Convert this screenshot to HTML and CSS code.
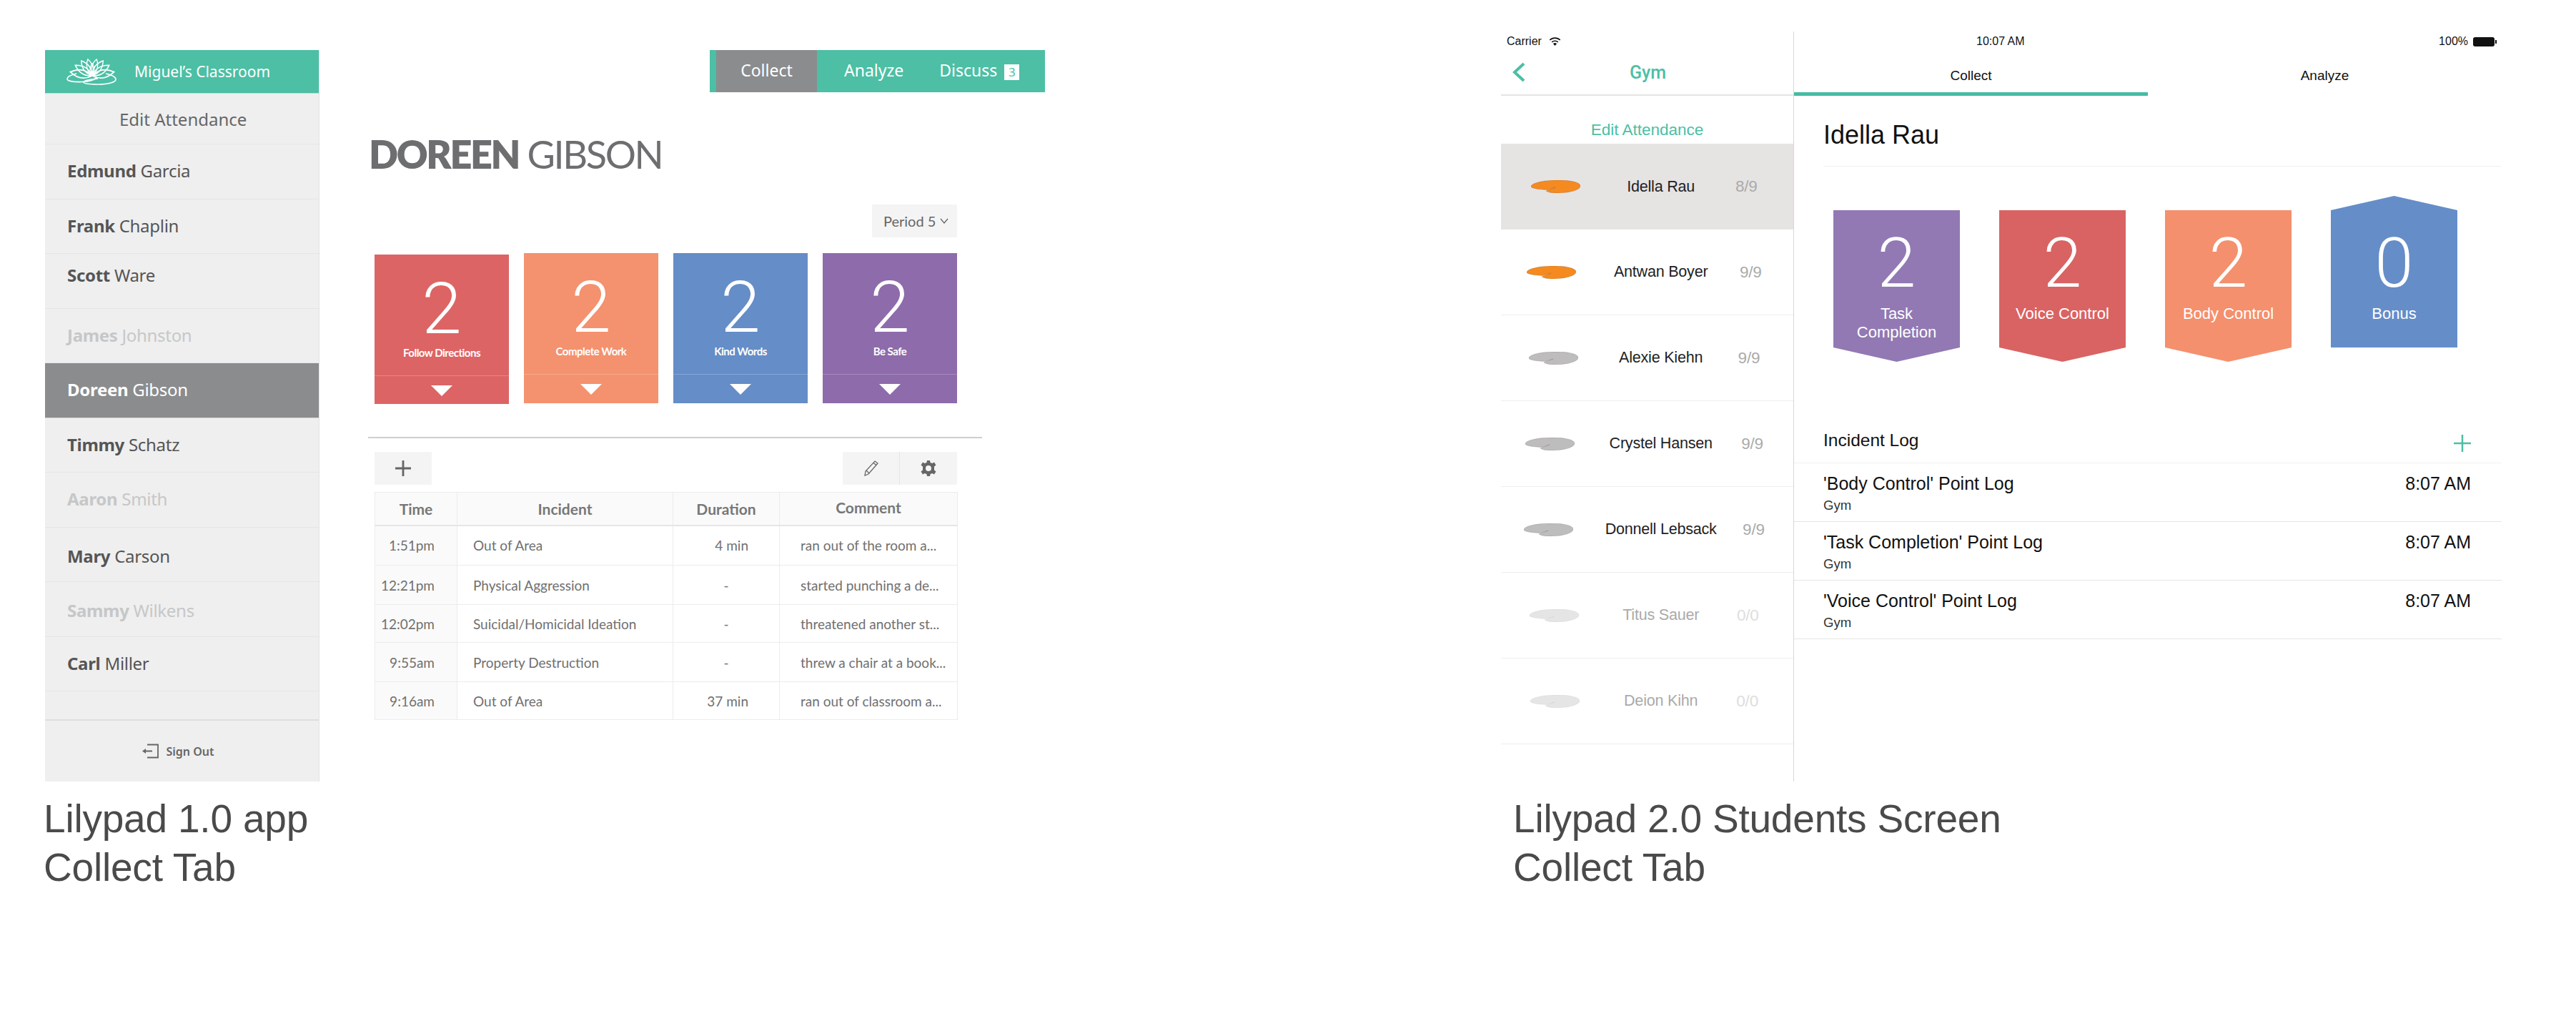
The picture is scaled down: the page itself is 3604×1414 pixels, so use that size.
FILE: index.html
```html
<!DOCTYPE html>
<html lang="en">
<head>
    <meta charset="UTF-8">
    <title>Lilypad Collect Tab</title>
    <link rel="stylesheet" href="styles.css">
</head>
<body>
    <svg class="defs" width="0" height="0">
        <defs>
            <path id="leaf" d="M34 10 L21 15 C24 17 29 18 35 18 C53 18 69 14 69 8 C69 3 55 0 38 0 C17 0 0 4 0 9 C0 11 9 13 23 13.5 Z"/>
            <path id="petal" d="M0 0 C-5 -7 -4 -14 0 -20 C4 -14 5 -7 0 0 Z"/>
        </defs>
    </svg>

    <div class="page">
        <section class="old-app">
            <div class="old-screen">
                <aside class="sidebar">
                    <div class="brand">
                        <svg class="lotus" viewBox="0 0 70 37">
                            <g fill="none" stroke="#fff" stroke-width="1.1">
                                <g transform="translate(36 24)">
                                    <use href="#petal" transform="rotate(-80) scale(1.6 1.55)"/>
                                    <use href="#petal" transform="rotate(80) scale(1.6 1.55)"/>
                                    <use href="#petal" transform="rotate(-58) scale(1.4)"/>
                                    <use href="#petal" transform="rotate(58) scale(1.4)"/>
                                    <use href="#petal" transform="rotate(-36) scale(1.3)"/>
                                    <use href="#petal" transform="rotate(36) scale(1.3)"/>
                                    <use href="#petal" transform="rotate(-15) scale(1.2)"/>
                                    <use href="#petal" transform="rotate(15) scale(1.2)"/>
                                    <use href="#petal" transform="scale(.9)"/>
                                </g>
                                <g stroke-width="1.7">
                                    <path d="M14 21 C5 23 1 26 1 28.500 C1 31 8 33 22 32.500 C31 32 38 30 42 27"/>
                                    <path d="M55 21 C64 23 69 26 69 29 C69 33 58 36 44 36 C32 36 24 35 24 33 C24 31 32 29 44 28"/>
                                </g>
                            </g>
                        </svg>
                        <span>Miguel’s Classroom</span>
                    </div>
                    <div class="edit-row">Edit Attendance</div>
                    <ul class="roster">
                        <li class="pupil"><b>Edmund</b> Garcia</li>
                        <li class="pupil"><b>Frank</b> Chaplin</li>
                        <li class="pupil pupil-high"><b>Scott</b> Ware</li>
                        <li class="pupil faded"><b>James</b> Johnston</li>
                        <li class="pupil selected"><b>Doreen</b> Gibson</li>
                        <li class="pupil"><b>Timmy</b> Schatz</li>
                        <li class="pupil faded"><b>Aaron</b> Smith</li>
                        <li class="pupil pupil-low"><b>Mary</b> Carson</li>
                        <li class="pupil pupil-low faded"><b>Sammy</b> Wilkens</li>
                        <li class="pupil"><b>Carl</b> Miller</li>
                    </ul>
                    <div class="sign-out">
                        <svg viewBox="0 0 23 21" width="23" height="21">
                            <path d="M7 1.500 H22 V19.500 H7" fill="none" stroke="#666" stroke-width="1.800"/>
                            <path d="M0 10.500 L5 7 V9.500 H14 V11.500 H5 V14 Z" fill="#666"/>
                        </svg>
                        <span>Sign Out</span>
                    </div>
                </aside>

                <main class="profile">
                    <nav class="tab-bar">
                        <a class="tab active">Collect</a>
                        <a class="tab">Analyze</a>
                        <a class="tab tab-discuss">Discuss <i class="count">3</i></a>
                    </nav>
                    <h1 class="student-name"><b>DOREEN</b> GIBSON</h1>
                    <div class="panel">
                        <div class="period">
                            <span>Period 5</span>
                            <svg viewBox="0 0 12 8" width="12" height="8"><path d="M1 1 L6 7 L11 1" fill="none" stroke="#666" stroke-width="1.300"/></svg>
                        </div>
                        <div class="cards">
                            <div class="card card-red card-first">
                                <div class="card-body"><div class="card-num">2</div><div class="card-label">Follow Directions</div></div>
                                <div class="card-arrow"><i></i></div>
                            </div>
                            <div class="card card-orange">
                                <div class="card-body"><div class="card-num">2</div><div class="card-label">Complete Work</div></div>
                                <div class="card-arrow"><i></i></div>
                            </div>
                            <div class="card card-blue">
                                <div class="card-body"><div class="card-num">2</div><div class="card-label">Kind Words</div></div>
                                <div class="card-arrow"><i></i></div>
                            </div>
                            <div class="card card-purple">
                                <div class="card-body"><div class="card-num">2</div><div class="card-label">Be Safe</div></div>
                                <div class="card-arrow"><i></i></div>
                            </div>
                        </div>
                    </div>
                    <hr class="rule">
                    <div class="panel">
                        <div class="toolbar">
                            <div class="tool">
                                <svg viewBox="0 0 22 22" width="22" height="22"><path d="M11 0 V22 M0 11 H22" stroke="#666" stroke-width="2.800"/></svg>
                            </div>
                            <div class="tool-group">
                                <div class="tool">
                                    <svg viewBox="0 0 22 22" width="22" height="22"><path d="M16 1 L20 4 L7 19 L2 21 L3 15 Z M4 14 L8 18 M14 3.500 L18 6.500" fill="none" stroke="#666" stroke-width="1.300"/></svg>
                                </div>
                                <div class="tool">
                                    <svg viewBox="0 0 22 22" width="22" height="22"><path fill="#666" fill-rule="evenodd" d="M9 0 H13 L13.600 3 L16.300 4.100 L19 2.500 L21.500 6.500 L19 8.500 V13.500 L21.500 15.500 L19 19.500 L16.300 17.900 L13.600 19 L13 22 H9 L8.400 19 L5.700 17.900 L3 19.500 L.5 15.500 L3 13.500 V8.500 L.5 6.500 L3 2.500 L5.700 4.100 L8.400 3 Z M11 7 A4 4 0 1 0 11 15 A4 4 0 1 0 11 7 Z"/></svg>
                                </div>
                            </div>
                        </div>
                        <table class="incidents">
                            <colgroup>
                                <col class="col-time"><col class="col-incident"><col class="col-duration"><col class="col-comment">
                            </colgroup>
                            <thead>
                                <tr><th>Time</th><th>Incident</th><th>Duration</th><th class="th-comment">Comment</th></tr>
                            </thead>
                            <tbody>
                                <tr class="row-a"><td class="time">1:51pm</td><td>Out of Area</td><td class="duration">4 min</td><td class="comment">ran out of the room a...</td></tr>
                                <tr class="row-b"><td class="time">12:21pm</td><td>Physical Aggression</td><td class="dash">-</td><td class="comment">started punching a de...</td></tr>
                                <tr class="row-c"><td class="time">12:02pm</td><td>Suicidal/Homicidal Ideation</td><td class="dash">-</td><td class="comment">threatened another st...</td></tr>
                                <tr class="row-b"><td class="time">9:55am</td><td>Property Destruction</td><td class="dash">-</td><td class="comment">threw a chair at a book...</td></tr>
                                <tr class="row-d"><td class="time">9:16am</td><td>Out of Area</td><td class="duration">37 min</td><td class="comment">ran out of classroom a...</td></tr>
                            </tbody>
                        </table>
                    </div>
                </main>
            </div>
            <p class="caption caption-old">Lilypad 1.0 app<br>Collect Tab</p>
        </section>

        <section class="new-app">
            <div class="device">
                <div class="students-pane">
                    <div class="status">
                        <span>Carrier</span>
                        <svg viewBox="0 0 17 12" width="17" height="12">
                            <path d="M8.500 12 L6 9.200 A3.600 3.600 0 0 1 11 9.200 Z" fill="#111"/>
                            <path d="M4.200 7 A6.200 6.200 0 0 1 12.800 7" fill="none" stroke="#111" stroke-width="1.700"/>
                            <path d="M1.300 4 A10.400 10.400 0 0 1 15.700 4" fill="none" stroke="#111" stroke-width="1.700"/>
                        </svg>
                    </div>
                    <div class="gym-nav">
                        <svg class="back" viewBox="0 0 18 28" width="18" height="28"><path d="M16 2 L3 14 L16 26" fill="none" stroke="#4cbfa5" stroke-width="4"/></svg>
                        <span>Gym</span>
                    </div>
                    <div class="attendance">Edit Attendance</div>
                    <ul class="students">
                        <li class="student current">
                            <svg class="pad pad-on" viewBox="0 0 69 18"><use href="#leaf"/></svg>
                            <span class="name">Idella Rau</span><span class="score">8/9</span>
                        </li>
                        <li class="student">
                            <svg class="pad pad-on" viewBox="0 0 69 18"><use href="#leaf"/></svg>
                            <span class="name">Antwan Boyer</span><span class="score">9/9</span>
                        </li>
                        <li class="student">
                            <svg class="pad" viewBox="0 0 69 18"><use href="#leaf"/></svg>
                            <span class="name">Alexie Kiehn</span><span class="score">9/9</span>
                        </li>
                        <li class="student">
                            <svg class="pad" viewBox="0 0 69 18"><use href="#leaf"/></svg>
                            <span class="name">Crystel Hansen</span><span class="score">9/9</span>
                        </li>
                        <li class="student">
                            <svg class="pad" viewBox="0 0 69 18"><use href="#leaf"/></svg>
                            <span class="name">Donnell Lebsack</span><span class="score">9/9</span>
                        </li>
                        <li class="student absent">
                            <svg class="pad" viewBox="0 0 69 18"><use href="#leaf"/></svg>
                            <span class="name">Titus Sauer</span><span class="score">0/0</span>
                        </li>
                        <li class="student absent">
                            <svg class="pad" viewBox="0 0 69 18"><use href="#leaf"/></svg>
                            <span class="name">Deion Kihn</span><span class="score">0/0</span>
                        </li>
                    </ul>
                </div>

                <div class="detail-pane">
                    <div class="status status-right">
                        <span class="clock">10:07 AM</span>
                        <span class="power">100%
                            <svg viewBox="0 0 33 13" width="33" height="13">
                                <rect x=".5" y=".5" width="29" height="12" rx="2" fill="#111" stroke="#111"/>
                                <rect x="31" y="4" width="2" height="5" fill="#111"/>
                            </svg>
                        </span>
                    </div>
                    <div class="seg-tabs">
                        <a class="seg-tab on">Collect</a>
                        <a class="seg-tab">Analyze</a>
                    </div>
                    <h2 class="detail-name">Idella Rau</h2>
                    <div class="badges">
                        <div class="badge badge-down badge-purple"><div class="badge-num">2</div><div class="badge-label">Task<br>Completion</div></div>
                        <div class="badge badge-down badge-red"><div class="badge-num">2</div><div class="badge-label">Voice Control</div></div>
                        <div class="badge badge-down badge-orange"><div class="badge-num">2</div><div class="badge-label">Body Control</div></div>
                        <div class="badge badge-up badge-blue"><div class="badge-num">0</div><div class="badge-label">Bonus</div></div>
                    </div>
                    <div class="log-head">
                        <span>Incident Log</span>
                        <svg viewBox="0 0 24 24" width="24" height="24"><path d="M12 0 V24 M0 12 H24" stroke="#4cbfa5" stroke-width="2.500"/></svg>
                    </div>
                    <div class="log-item">
                        <div><div class="log-title">'Body Control' Point Log</div><div class="log-place">Gym</div></div>
                        <div class="log-title">8:07 AM</div>
                    </div>
                    <div class="log-item">
                        <div><div class="log-title">'Task Completion' Point Log</div><div class="log-place">Gym</div></div>
                        <div class="log-title">8:07 AM</div>
                    </div>
                    <div class="log-item">
                        <div><div class="log-title">'Voice Control' Point Log</div><div class="log-place">Gym</div></div>
                        <div class="log-title">8:07 AM</div>
                    </div>
                </div>
            </div>
            <p class="caption caption-new">Lilypad 2.0 Students Screen<br>Collect Tab</p>
        </section>
    </div>
</body>
</html>
```
FILE: styles.css
```css
* {
    margin: 0;
    padding: 0;
    box-sizing: border-box;
}

html, body {
    width: 3604px;
    height: 1414px;
    overflow: hidden;
    background: #fff;
    font-family: "Liberation Sans", Arial, sans-serif;
}

ul {
    list-style: none;
}

.defs {
    position: absolute;
}

.page {
    display: flex;
}

.caption {
    margin-top: 18px;
    font-size: 55px;
    line-height: 68px;
    letter-spacing: -.2px;
    color: #4a4a4a;
    white-space: nowrap;
}

.caption-old {
    margin-left: -2px;
}

.caption-new {
    padding-left: 17px;
}

/* old app */

.old-app {
    width: 2037px;
    margin-left: 63px;
    padding-top: 70px;
}

.old-screen {
    display: flex;
    height: 1023px;
    font-family: "Noto Sans", sans-serif;
}

.sidebar {
    display: flex;
    flex-direction: column;
    width: 384px;
    background: #efefef;
    border-right: 1px solid #e2e2e2;
    color: #555;
}

.brand {
    display: flex;
    align-items: center;
    height: 61px;
    padding-left: 30px;
    background: #4cbfa5;
    border-bottom: 1px solid #b9e0d6;
    color: #fff;
    font-size: 21px;
}

.lotus {
    width: 70px;
    height: 37px;
    margin-right: 25px;
}

.edit-row {
    height: 71px;
    padding-top: 20px;
    padding-left: 104px;
    border-bottom: 1px solid #e5e5e5;
    font-size: 24px;
    line-height: 32px;
    color: #666;
}

.roster {
    flex: 1;
}

.pupil {
    height: 76.5px;
    padding: 22px 0 0 31px;
    border-bottom: 1px solid #e5e5e5;
    font-size: 24px;
    letter-spacing: -.3px;
    line-height: 30px;
}

.pupil-low {
    padding-top: 25px;
}

.pupil-high {
    padding-top: 15px;
}

.pupil.faded {
    color: #c6c7c8;
}

.pupil.selected {
    background: #8b8c8e;
    border-bottom: 1px solid #d4d4d4;
    color: #fff;
}

.sign-out {
    display: flex;
    align-items: center;
    justify-content: center;
    gap: 10px;
    height: 87px;
    padding-right: 10px;
    border-top: 2px solid #dedede;
    font-size: 16px;
    font-weight: 600;
    color: #666;
}

.profile {
    width: 947px;
    margin-left: 68px;
}

.tab-bar {
    display: flex;
    width: 469px;
    height: 59px;
    margin-left: auto;
    border-left: 9px solid #4cbfa5;
    background: #4cbfa5;
    color: #fff;
    font-size: 23px;
    line-height: 56px;
}

.tab {
    padding-left: 38px;
}

.tab.active {
    width: 141px;
    padding-left: 0;
    text-align: center;
    background: #8b8c8e;
}

.tab-discuss {
    padding-left: 50px;
}

.count {
    display: inline-block;
    width: 21px;
    height: 22px;
    margin-left: 4px;
    background: #fff;
    color: #4cbfa5;
    font-size: 17px;
    font-style: normal;
    line-height: 22px;
    text-align: center;
}

.student-name {
    margin-top: 55px;
    padding-left: 1px;
    font-family: "Lato", sans-serif;
    font-size: 54px;
    font-weight: 400;
    letter-spacing: -2.4px;
    line-height: 64px;
    color: #6d6e70;
    white-space: nowrap;
}

.student-name b {
    font-weight: 800;
}

.panel {
    width: 815px;
    margin-left: 9px;
}

.period {
    display: flex;
    align-items: center;
    justify-content: space-between;
    width: 119px;
    height: 46px;
    margin: 38px 0 22px auto;
    padding: 0 12px 0 16px;
    background: #f4f4f4;
    border-radius: 2px;
    font-family: "Lato", sans-serif;
    font-size: 20px;
    color: #666;
}

.cards {
    display: flex;
    align-items: flex-start;
    justify-content: space-between;
}

.card {
    width: 188px;
    height: 210px;
    color: #fff;
}

.card-first {
    height: 209px;
    margin-top: 2px;
}

.card-red {
    background: #dd6464;
}

.card-orange {
    background: #f4916e;
}

.card-blue {
    background: #658dc7;
}

.card-purple {
    background: #8e6bab;
}

.card-body {
    height: 169px;
    padding-top: 26px;
    text-align: center;
}

.card-num {
    font-family: "Roboto", sans-serif;
    font-size: 100px;
    font-weight: 300;
    line-height: 100px;
}

.card-label {
    margin-top: 1px;
    font-family: "Lato", sans-serif;
    font-size: 15px;
    font-weight: 700;
    letter-spacing: -.5px;
    line-height: 20px;
}

.card-arrow {
    display: flex;
    align-items: center;
    justify-content: center;
    height: 41px;
    border-top: 1px solid rgba(255,255,255,.22);
}

.card-arrow i {
    border-top: 15px solid #fff;
    border-left: 15px solid transparent;
    border-right: 15px solid transparent;
}

.rule {
    width: 859px;
    height: 2px;
    margin-top: 46px;
    border: 0;
    background: #cfcfcf;
}

.toolbar {
    display: flex;
    justify-content: space-between;
    margin: 19px 0 10px;
}

.tool-group {
    display: flex;
}

.tool {
    display: flex;
    align-items: center;
    justify-content: center;
    width: 80px;
    height: 46px;
    background: #f4f4f4;
}

.tool-group .tool:first-child {
    border-right: 1px solid #e4e4e4;
}

.incidents {
    width: 815px;
    table-layout: fixed;
    border-collapse: collapse;
    font-family: "Lato", sans-serif;
    font-size: 19px;
    color: #707070;
}

.col-time {
    width: 115px;
}

.col-incident {
    width: 302px;
}

.col-duration {
    width: 149px;
}

.col-comment {
    width: 249px;
}

.incidents th, .incidents td {
    border: 1px solid #ececec;
    white-space: nowrap;
    overflow: hidden;
}

.incidents th {
    height: 46px;
    background: #fafafa;
    border-bottom: 2px solid #e6e6e6;
    font-size: 21px;
    font-weight: 700;
    color: #777;
}

.th-comment {
    padding-bottom: 4px;
}

.incidents td {
    padding-left: 22px;
}

.row-a td {
    height: 56px;
}

.row-b td {
    height: 55px;
}

.row-c td {
    height: 53px;
}

.row-d td {
    height: 53px;
}

.incidents td.time {
    padding: 0 31px 0 0;
    background: #fafafa;
    text-align: right;
}

.incidents td.duration {
    padding: 0 43px 0 0;
    text-align: right;
}

.incidents td.dash {
    padding: 0;
    text-align: center;
}

.incidents td.comment {
    padding-left: 29px;
}

/* new app */

.new-app {
    width: 1400px;
    padding-top: 44px;
}

.device {
    display: flex;
    height: 1049px;
}

.students-pane {
    width: 409px;
}

.status {
    display: flex;
    align-items: center;
    gap: 10px;
    height: 28px;
    padding-left: 8px;
    font-size: 16px;
    color: #111;
}

.gym-nav {
    display: flex;
    align-items: center;
    height: 62px;
    padding: 0 0 2px 16px;
    border-bottom: 2px solid #e4e4e4;
    color: #4cbfa5;
    font-family: "Roboto", sans-serif;
    font-size: 25px;
    font-weight: 500;
}

.back {
    margin-right: 146px;
}

.attendance {
    height: 67px;
    padding-top: 35px;
    text-align: center;
    color: #4cbfa5;
    font-size: 22.5px;
    line-height: 26px;
}

.student {
    display: flex;
    align-items: center;
    justify-content: space-around;
    height: 120px;
    padding: 0 18px 0 10px;
    border-bottom: 1px solid #eee;
    font-size: 21.5px;
    letter-spacing: -.2px;
    color: #222;
}

.student.current {
    background: #e6e3e3;
    border-bottom: 0;
}

.pad {
    width: 69px;
    height: 18px;
    fill: #bdbdbd;
    stroke: rgba(70,50,30,.3);
    stroke-width: .6;
}

.pad-on {
    fill: #f58a20;
}

.name {
    margin-right: -8px;
}

.score {
    color: #aaa;
    font-size: 22.5px;
}

.student.absent {
    color: #aaa;
}

.student.absent .pad {
    fill: #e5e5e5;
    stroke: rgba(70,50,30,.1);
}

.student.absent .score {
    color: #ddd;
}

.detail-pane {
    width: 991px;
    border-left: 1px solid #d8d8d8;
}

.status-right {
    justify-content: space-between;
    padding: 0 7px 0 255px;
}

.clock {
    font-weight: 400;
}

.power {
    display: flex;
    align-items: center;
    gap: 7px;
}

.seg-tabs {
    display: flex;
    height: 62px;
}

.seg-tab {
    width: 495px;
    padding-top: 22px;
    text-align: center;
    font-size: 19px;
    line-height: 24px;
    color: #111;
}

.seg-tab.on {
    border-bottom: 5px solid #45bca3;
}

.detail-name {
    margin: 0 1px 0 41px;
    padding: 33px 0 21px;
    border-bottom: 1px solid #f1f1f1;
    font-size: 36px;
    font-weight: 400;
    line-height: 44px;
    color: #111;
}

.badges {
    display: flex;
    gap: 55px;
    align-items: flex-start;
    margin: 41px 0 0 55px;
}

.badge {
    width: 177px;
    height: 212px;
    color: #fff;
    text-align: center;
}

.badge-down {
    margin-top: 20px;
    padding-top: 26px;
    clip-path: polygon(0 0, 100% 0, 100% 192px, 50% 100%, 0 192px);
}

.badge-up {
    padding-top: 46px;
    clip-path: polygon(50% 0, 100% 20px, 100% 100%, 0 100%, 0 20px);
}

.badge-purple {
    background: #9279b3;
}

.badge-red {
    background: #d96363;
}

.badge-orange {
    background: #f4906d;
}

.badge-blue {
    background: #658dc8;
}

.badge-num {
    font-family: "Roboto", sans-serif;
    font-size: 97px;
    font-weight: 300;
    line-height: 97px;
}

.badge-label {
    margin-top: 9px;
    padding: 0 20px;
    font-size: 22px;
    line-height: 26px;
}

.log-head {
    display: flex;
    justify-content: space-between;
    margin-top: 97px;
    padding: 0 43px 15px 41px;
    border-bottom: 1px solid #f1f1f1;
    font-size: 24.500px;
    line-height: 26px;
    color: #111;
}

.log-head svg {
    margin-top: 5px;
}

.log-item {
    display: flex;
    justify-content: space-between;
    height: 82px;
    padding: 15px 43px 0 41px;
    border-bottom: 1px solid #e6e6e6;
}

.log-title {
    font-size: 25px;
    line-height: 26px;
    color: #111;
}

.log-place {
    margin-top: 8px;
    font-size: 18.500px;
    line-height: 20px;
    color: #333;
}
```
